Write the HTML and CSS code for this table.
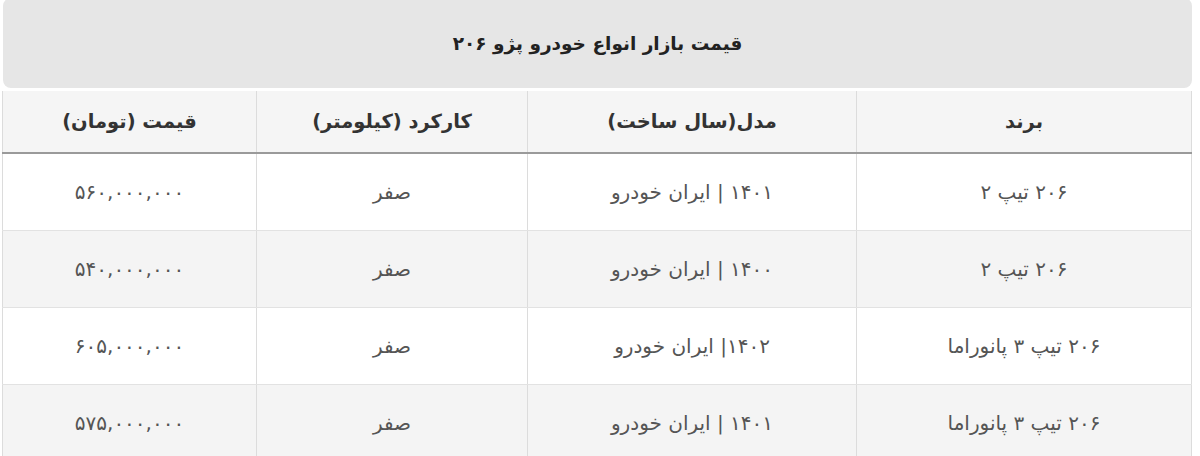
FILE: index.html
```html
<!DOCTYPE html>
<html lang="fa" dir="rtl">
<head>
<meta charset="utf-8">
<link rel="stylesheet" href="styles.css">
</head>
<body>
<div class="wrap">
  <div class="title">قیمت بازار انواع خودرو پژو ۲۰۶</div>
  <table class="prices">
    <colgroup>
      <col class="c-brand">
      <col class="c-model">
      <col class="c-km">
      <col class="c-price">
    </colgroup>
    <thead>
      <tr>
        <th>برند</th>
        <th>مدل(سال ساخت)</th>
        <th>کارکرد (کیلومتر)</th>
        <th>قیمت (تومان)</th>
      </tr>
    </thead>
    <tbody>
      <tr>
        <td>۲۰۶ تیپ ۲</td>
        <td>۱۴۰۱ | ایران خودرو</td>
        <td>صفر</td>
        <td>۵۶۰,۰۰۰,۰۰۰</td>
      </tr>
      <tr>
        <td>۲۰۶ تیپ ۲</td>
        <td>۱۴۰۰ | ایران خودرو</td>
        <td>صفر</td>
        <td>۵۴۰,۰۰۰,۰۰۰</td>
      </tr>
      <tr>
        <td>۲۰۶ تیپ ۳ پانوراما</td>
        <td>۱۴۰۲| ایران خودرو</td>
        <td>صفر</td>
        <td>۶۰۵,۰۰۰,۰۰۰</td>
      </tr>
      <tr>
        <td>۲۰۶ تیپ ۳ پانوراما</td>
        <td>۱۴۰۱ | ایران خودرو</td>
        <td>صفر</td>
        <td>۵۷۵,۰۰۰,۰۰۰</td>
      </tr>
    </tbody>
  </table>
</div>
</body>
</html>
```

FILE: styles.css
```css
html, body {
  margin: 0;
  padding: 0;
  background: #ffffff;
}
body {
  font-family: "DejaVu Sans", "Liberation Sans", sans-serif;
  color: #444;
}
.wrap {
  width: 1189px;
  margin-left: 3px;
  margin-right: 8px;
}
.title {
  height: 90px;
  background: #e6e6e6;
  border-radius: 8px;
  display: flex;
  align-items: center;
  justify-content: center;
  font-size: 18.5px;
  font-weight: bold;
  color: #222;
  margin-top: -2px;
}
.prices {
  width: 100%;
  border-collapse: collapse;
  table-layout: fixed;
  margin-top: 3px;
}
.c-brand { width: 335px; }
.c-model { width: 329px; }
.c-km { width: 271px; }
.c-price { width: 254px; }
.prices th,
.prices td {
  text-align: center;
  border-left: 1px solid #dcdcdc;
  border-right: 1px solid #dcdcdc;
}
.prices th {
  height: 61px;
  background: #f5f5f5;
  font-size: 19.5px;
  font-weight: bold;
  color: #333;
  border-bottom: 2px solid #9a9a9a;
  padding: 0;
}
.prices td {
  height: 76px;
  font-size: 20px;
  color: #555;
  border-bottom: 1px solid #e2e2e2;
  padding: 0;
}
.prices tbody tr:nth-child(even) td {
  background: #f4f4f4;
}
```
